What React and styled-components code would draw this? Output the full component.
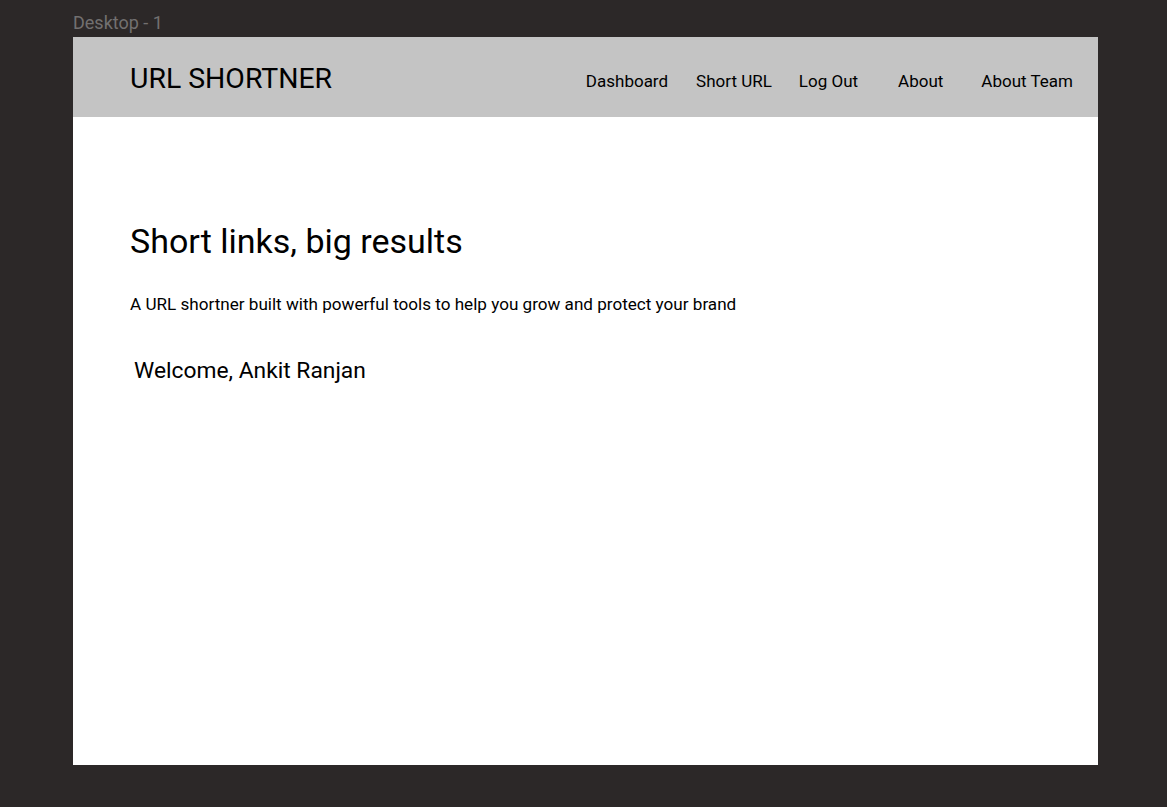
import React from "react";
import styled, { createGlobalStyle } from "styled-components";

const Global = createGlobalStyle`
  html, body { margin: 0; padding: 0; background: #2c2828; }
  body { font-family: Roboto, "Liberation Sans", sans-serif; }
`;

const Canvas = styled.div`
  width: 1167px;
  height: 807px;
  background: #2c2828;
  padding: 12px 0 0 73px;
  box-sizing: border-box;
`;

const FrameLabel = styled.div`
  font-size: 18px;
  line-height: 22px;
  color: #727070;
  height: 25px;
`;

const Frame = styled.div`
  width: 1025px;
  height: 728px;
  background: #ffffff;
  display: flex;
  flex-direction: column;
`;

const Header = styled.header`
  height: 80px;
  background: #c4c4c4;
  display: flex;
  align-items: center;
  justify-content: space-between;
  padding: 0 25px 0 57px;
  box-sizing: border-box;
`;

const Brand = styled.div`
  font-size: 28.4px;
  color: #000;
  margin-top: 2px;
`;

const Nav = styled.nav`
  display: flex;
  align-items: center;
  margin-top: 8px;
`;

const NavLink = styled.a`
  font-size: 17px;
  color: #000;
  text-decoration: none;
  margin-left: ${(p) => p.$gap}px;
`;

const Main = styled.main`
  padding: 102px 57px 0;
  display: flex;
  flex-direction: column;
`;

const Title = styled.h1`
  margin: 0;
  font-weight: 400;
  font-size: 34px;
  line-height: 44px;
  color: #000;
`;

const Subtitle = styled.p`
  margin: 31px 0 0;
  font-size: 17.1px;
  line-height: 20px;
  color: #000;
`;

const Welcome = styled.p`
  margin: 43px 0 0 4px;
  font-size: 22.8px;
  line-height: 28px;
  color: #000;
`;

const links = [
  { label: "Dashboard", gap: 0 },
  { label: "Short URL", gap: 28 },
  { label: "Log Out", gap: 27 },
  { label: "About", gap: 40 },
  { label: "About Team", gap: 38 },
];

export default function App() {
  return (
    <>
      <Global />
      <Canvas>
        <FrameLabel>Desktop - 1</FrameLabel>
        <Frame>
          <Header>
            <Brand>URL SHORTNER</Brand>
            <Nav>
              {links.map((l) => (
                <NavLink key={l.label} href="#" $gap={l.gap}>
                  {l.label}
                </NavLink>
              ))}
            </Nav>
          </Header>
          <Main>
            <Title>Short links, big results</Title>
            <Subtitle>
              A URL shortner built with powerful tools to help you grow and protect your brand
            </Subtitle>
            <Welcome>Welcome, Ankit Ranjan</Welcome>
          </Main>
        </Frame>
      </Canvas>
    </>
  );
}
